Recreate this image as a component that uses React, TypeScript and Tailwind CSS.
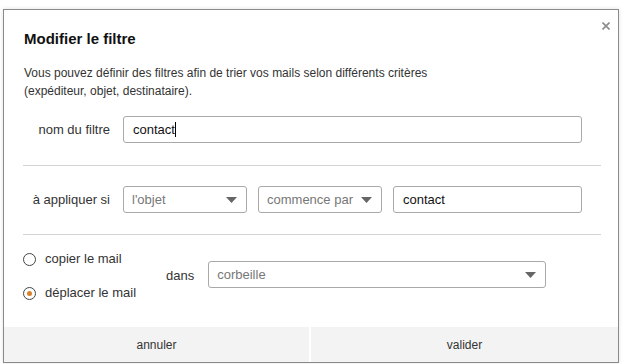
import React from "react";

const font = { fontFamily: '"Liberation Sans", Arial, sans-serif' };

function Caret() {
  return (
    <svg width="11" height="6" viewBox="0 0 11 6" className="shrink-0">
      <polygon points="0,0 11,0 5.5,6" fill="#666" />
    </svg>
  );
}

function Select({ value, className }: { value: string; className: string }) {
  return (
    <div className={`h-[27px] border border-[#a9a9a9] rounded-[3px] bg-white flex items-center pl-[8px] pr-[9px] ${className}`}>
      <span className="flex-1 text-[13px] text-[#777] whitespace-nowrap overflow-hidden">{value}</span>
      <Caret />
    </div>
  );
}

function Radio({ checked, label }: { checked?: boolean; label: string }) {
  return (
    <div className="h-[18px] flex items-center gap-[9px]">
      <span className="w-[13px] h-[13px] rounded-full border border-[#444] bg-white flex items-center justify-center">
        {checked && <span className="w-[5px] h-[5px] rounded-full bg-[#d9822b]" />}
      </span>
      <span className="text-[13px] text-[#333]">{label}</span>
    </div>
  );
}

export default function App() {
  return (
    <div className="w-[624px] h-[364px] bg-white overflow-hidden" style={font}>
      <div className="relative ml-[3px] mt-[9px] w-[616px] h-[354px] border border-[#8a8a8a] bg-white flex flex-col shadow-[0_0_4px_rgba(0,0,0,0.12)]">
        <button className="absolute right-[7px] top-[11px] w-[10px] h-[10px] flex items-center justify-center">
          <svg width="8" height="8" viewBox="0 0 8 8">
            <path d="M0.5 0.5 L7.5 7.5 M7.5 0.5 L0.5 7.5" stroke="#8c8c8c" strokeWidth="1.6" />
          </svg>
        </button>

        <h1 className="pl-[20px] pt-[19px] text-[15px] leading-[20px] font-bold text-[#111]">Modifier le filtre</h1>

        <p className="mt-[15px] px-[20px] text-[12px] leading-[18px] text-[#333]">
          Vous pouvez définir des filtres afin de trier vos mails selon différents critères
          <br />
          (expéditeur, objet, destinataire).
        </p>

        {/* nom du filtre */}
        <div className="mt-[16px] flex items-center">
          <label className="w-[106px] text-right text-[13px] text-[#333]">nom du filtre</label>
          <div className="ml-[13px] w-[459px] h-[27px] border border-[#a9a9a9] rounded-[3px] flex items-center pl-[9px]">
            <span className="text-[13px] text-[#111]">contact</span>
            <span className="w-px h-[15px] bg-black" />
          </div>
        </div>

        <div className="mt-[22px] ml-[19px] w-[578px] h-px bg-[#d4d4d4]" />

        {/* à appliquer si */}
        <div className="mt-[20px] flex items-center">
          <label className="w-[106px] text-right text-[13px] text-[#333]">à appliquer si</label>
          <Select value="l'objet" className="ml-[13px] w-[124px]" />
          <Select value="commence par" className="ml-[11px] w-[124px]" />
          <div className="ml-[11px] w-[189px] h-[27px] border border-[#a9a9a9] rounded-[3px] flex items-center pl-[9px]">
            <span className="text-[13px] text-[#111]">contact</span>
          </div>
        </div>

        <div className="mt-[21px] ml-[19px] w-[578px] h-px bg-[#d4d4d4]" />

        {/* action */}
        <div className="mt-[15px] flex items-start">
          <div className="w-[162px] pl-[19px] flex flex-col gap-[16px]">
            <Radio label="copier le mail" />
            <Radio checked label="déplacer le mail" />
          </div>
          <span className="mt-[17px] text-[13px] leading-[18px] text-[#333]">dans</span>
          <Select value="corbeille" className="mt-[11px] ml-[14px] w-[338px]" />
        </div>

        <div className="mt-auto h-[35px] bg-[#f3f3f3] flex">
          <button className="w-[305px] text-[12px] text-[#333]">annuler</button>
          <div className="w-[2px] bg-white" />
          <button className="flex-1 text-[12px] text-[#333]">valider</button>
        </div>
      </div>
    </div>
  );
}
